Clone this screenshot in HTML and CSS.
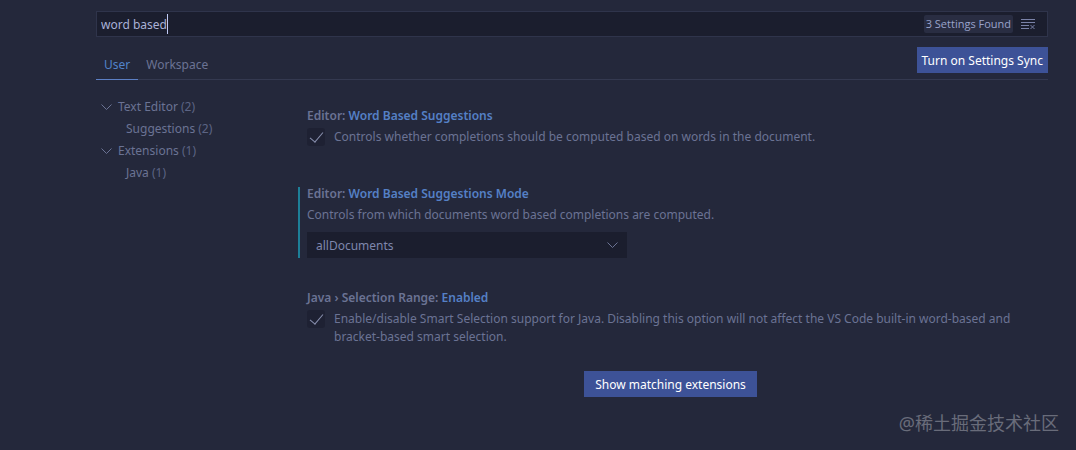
FILE: index.html
```html
<!DOCTYPE html>
<html lang="en">
<head>
  <meta charset="UTF-8" />
  <meta name="viewport" content="width=device-width, initial-scale=1.0"/>
  <title>Settings</title>
  <link rel="stylesheet" href="styles.css">
</head>
<body>

  <header>
    <div class="search">
      <label class="search-field">
        <input type="text" id="search" value="word based" aria-label="Search settings">
        <span class="caret"></span>
      </label>
      <span class="count">3 Settings Found</span>
      <button class="clear" aria-label="Clear search">
        <svg width="16" height="16" viewBox="0 0 16 16" fill="none" stroke="currentColor">
          <path d="M1 3.5h14M1 6.5h14M1 9.5h8M1 12.5h8M10.5 9l4 4M14.5 9l-4 4"/>
        </svg>
      </button>
    </div>
    <div class="bar">
      <nav class="tabs">
        <a href="#" class="tab active">User</a>
        <a href="#" class="tab">Workspace</a>
      </nav>
      <button class="primary sync">Turn on Settings Sync</button>
    </div>
  </header>

  <main>
    <nav class="toc">
      <a href="#" class="group">
        <svg width="11" height="6" viewBox="0 0 11 6" fill="none" stroke="currentColor"><path d="M.5.5l5 5 5-5"/></svg>
        <span>Text Editor <span class="num">(2)</span></span>
      </a>
      <a href="#" class="child">Suggestions <span class="num">(2)</span></a>
      <a href="#" class="group">
        <svg width="11" height="6" viewBox="0 0 11 6" fill="none" stroke="currentColor"><path d="M.5.5l5 5 5-5"/></svg>
        <span>Extensions <span class="num">(1)</span></span>
      </a>
      <a href="#" class="child">Java <span class="num">(1)</span></a>
    </nav>

    <section class="settings">
      <div class="item">
        <h3>Editor: <span>Word Based Suggestions</span></h3>
        <div class="check">
          <input type="checkbox" id="suggestions" checked>
          <label for="suggestions">Controls whether completions should be computed based on words in the document.</label>
        </div>
      </div>

      <div class="item modified">
        <h3>Editor: <span>Word Based Suggestions Mode</span></h3>
        <label for="mode">Controls from which documents word based completions are computed.</label>
        <div class="select">
          <select id="mode">
            <option>off</option>
            <option>currentDocument</option>
            <option>matchingDocuments</option>
            <option selected>allDocuments</option>
          </select>
          <svg width="11" height="6" viewBox="0 0 11 6" fill="none" stroke="currentColor"><path d="M.5.5l5 5 5-5"/></svg>
        </div>
      </div>

      <div class="item">
        <h3>Java › Selection Range: <span>Enabled</span></h3>
        <div class="check">
          <input type="checkbox" id="selection" checked>
          <label for="selection">Enable/disable Smart Selection support for Java. Disabling this option will not affect the VS Code built-in word-based and bracket-based smart selection.</label>
        </div>
      </div>

      <button class="primary more">Show matching extensions</button>
    </section>
  </main>

  <div class="watermark">@稀土掘金技术社区</div>

</body>
</html>
```

FILE: styles.css
```css
* {
  margin: 0; padding: 0; box-sizing: border-box;
}

body {
  background: #24283b;
  color: #6b7394;
  font-family: 'Noto Sans', 'Noto Sans CJK SC', sans-serif;
  font-size: 12px;
  line-height: 18px;
  padding: 11px 28px 0 96px;
}

a {
  color: inherit;
  text-decoration: none;
}

input, select, button {
  font: inherit;
  color: inherit;
  border: none;
  outline: none;
}

button {
  background: none;
  cursor: pointer;
}

/* search box */
.search {
  display: flex;
  align-items: center;
  height: 26px;
  background: #1b1e2e;
  border: 1px solid #2f344b;
  padding: 0 11px 0 4px;
}

.search-field {
  flex: 1;
  display: flex;
  align-items: center;
}

.search-field input {
  field-sizing: content;
  padding-top: 2px;
  background: none;
  color: #a9b1d6;
}

.caret {
  width: 1px;
  height: 20px;
  background: #c0caf5;
}

.count {
  background: #292d42;
  color: #9aa3cb;
  font-family: 'Open Sans', sans-serif;
  font-size: 11px;
  line-height: 18px;
  padding: 0 2px;
  border-radius: 2px;
}

.clear {
  display: flex;
  margin-left: 7px;
  color: #7a82a8;
}

/* tabs */
.bar {
  display: flex;
  justify-content: space-between;
  align-items: flex-start;
  height: 43px;
  padding-top: 10px;
  border-bottom: 1px solid #343950;
}

.tabs {
  display: flex;
}

.tab {
  height: 33px;
  padding: 9px 8px 0;
}

.tab.active {
  color: #5183c9;
  border-bottom: 1px solid #5c7fc4;
}

.primary {
  height: 26px;
  background: #3d5297;
  color: #fff;
  white-space: nowrap;
}

.sync {
  padding: 2px 5px 0;
}

/* content */
main {
  display: flex;
  padding-top: 15px;
}

.toc {
  width: 197px;
  padding-top: 1px;
  line-height: 22px;
}

.toc a {
  display: block;
}

.toc .group {
  display: flex;
  align-items: center;
  gap: 6px;
  padding-left: 5px;
}

.toc .child {
  padding-left: 30px;
}

.num {
  color: #5c6484;
}

.settings {
  flex: 1;
  padding-top: 14px;
}

.item {
  margin: 0 8px 33px 5px;
  padding-left: 9px;
}

.item:last-of-type {
  margin-bottom: 17px;
}

.modified {
  padding-left: 7px;
  border-left: 2px solid #1d7f98;
}

.item h3 {
  font-size: 12px;
  font-weight: 600;
  line-height: 14px;
  margin-bottom: 5px;
}

.item h3 span {
  color: #5580c6;
}

.check {
  display: flex;
  align-items: flex-start;
  gap: 9px;
  padding-bottom: 8px;
}

.check input {
  appearance: none;
  flex: none;
  display: grid;
  place-items: center;
  width: 18px;
  height: 18px;
  background: #1e2133;
  border-radius: 3px;
}

.check input:checked::after {
  content: "";
  width: 6px;
  height: 12px;
  margin-bottom: 4px;
  border: solid #8a91b0;
  border-width: 0 1px 1px 0;
  transform: rotate(40deg);
}

.select {
  display: flex;
  align-items: center;
  max-width: 320px;
  margin-top: 8px;
  background: #1b1e2e;
}

.select select {
  appearance: none;
  flex: 1;
  height: 26px;
  padding: 2px 9px 0;
  background: none;
  color: #7e87ad;
}

.select svg {
  margin: 0 9px 0 -20px;
  pointer-events: none;
}

.more {
  display: block;
  margin: 0 auto;
  padding: 2px 11px 0;
}

.watermark {
  position: absolute;
  right: 17px;
  bottom: 14px;
  font-size: 18px;
  line-height: 26px;
  color: #696c7a;
}
```
